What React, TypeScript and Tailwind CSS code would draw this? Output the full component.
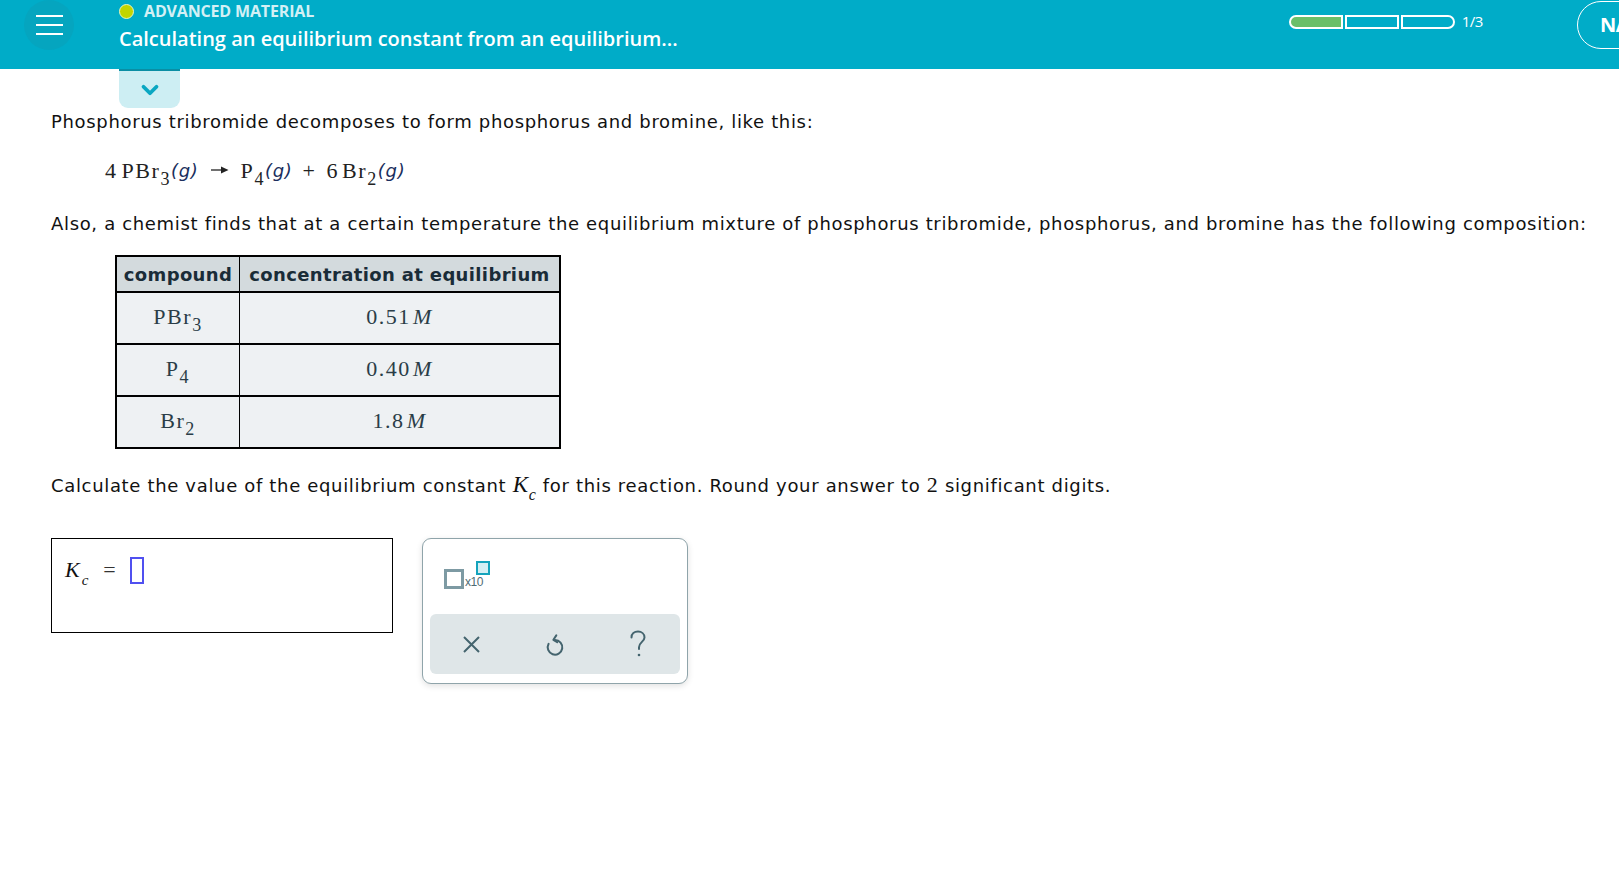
import { ChevronDown } from "lucide-react";

const Sub = ({ children }: { children: React.ReactNode }) => (
  <sub className="text-[0.82em] relative top-[0.4em] bottom-auto align-baseline">{children}</sub>
);

const Gas = () => (
  <span className="font-['DejaVu_Sans',sans-serif] italic text-[18px] tracking-[0.04em] text-[#1b2f5e]">(g)</span>
);

const rows = [
  { name: "PBr", sub: "3", value: "0.51" },
  { name: "P", sub: "4", value: "0.40" },
  { name: "Br", sub: "2", value: "1.8" },
];

const Header = () => (
  <header className="h-[69px] bg-[#00acc8] flex items-start overflow-hidden">
    {/* Menu */}
    <div className="ml-[24px] w-[50px] h-[50px] rounded-full bg-[#05a5bf] flex flex-col items-center justify-center gap-[7px]">
      <span className="block w-[27px] h-[2px] bg-white" />
      <span className="block w-[27px] h-[2px] bg-white" />
      <span className="block w-[27px] h-[2px] bg-white" />
    </div>

    {/* Title */}
    <div className="ml-[45px] font-['Open_Sans',sans-serif]">
      <div className="h-[22px] flex items-center gap-[10px]">
        <span className="w-[15px] h-[15px] rounded-full bg-[#c2d500] border border-[#e8f5c0]" />
        <span className="text-[16px] font-bold tracking-[-0.01em] text-[#d3f0f5] leading-none">
          ADVANCED MATERIAL
        </span>
      </div>
      <div className="mt-[5px] text-[20px] font-semibold text-white leading-[24px]">
        Calculating an equilibrium constant from an equilibrium...
      </div>
    </div>

    {/* Progress */}
    <div className="ml-auto mt-[14px] flex items-center">
      <div className="flex gap-[2px]">
        <div className="w-[54px] h-[14px] rounded-l-full border-2 border-white bg-[#6bbf69]" />
        <div className="w-[54px] h-[14px] border-2 border-white" />
        <div className="w-[54px] h-[14px] rounded-r-full border-2 border-white" />
      </div>
      <span className="ml-[7px] text-[15px] text-white font-['Open_Sans',sans-serif] tracking-[-0.03em] leading-none">
        1/3
      </span>
    </div>

    <div className="ml-[94px] -mr-[40px] mt-[1px] w-[82px] h-[48px] rounded-full border-[1.5px] border-white flex items-center pl-[22px]">
      <span className="text-[20px] font-bold text-white font-['Open_Sans',sans-serif] tracking-tight">NA</span>
    </div>
  </header>
);

const Keypad = () => (
  <div className="w-[266px] h-[146px] rounded-[9px] border border-[#8fa4aa] bg-white shadow-[0_2px_6px_rgba(0,0,0,0.12)] flex flex-col">
    <div className="h-[75px] pl-[21px] pt-[22px]">
      <div className="flex items-end">
        <div className="w-[20px] h-[20px] border-[3px] border-[#7d9aa3]" />
        <span className="text-[12px] leading-none text-[#4f6c75] font-['Liberation_Sans',sans-serif] mb-[1px] ml-[1px] tracking-[-0.04em]">
          x10
        </span>
        <div className="-ml-[7px] mb-[14px] w-[14px] h-[14px] border-2 border-[#14a3bc] bg-[#d4eff4]" />
      </div>
    </div>
    <div className="mx-[7px] h-[60px] rounded-[6px] bg-[#dfe6e8] grid grid-cols-3 items-center justify-items-center text-[#44646e]">
      <svg width="19" height="19" viewBox="0 0 19 19" fill="none" stroke="currentColor" strokeWidth="2">
        <path d="M2 2L17 17M17 2L2 17" />
      </svg>
      <svg width="22" height="26" viewBox="0 0 22 26" fill="none" stroke="currentColor" strokeWidth="2" strokeLinecap="round" strokeLinejoin="round">
        <path d="M11 9A7.3 7.3 0 1 1 4.6 12.8" />
        <path d="M12.3 4.4L9.4 8.8L13.2 11.2" />
      </svg>
      <svg width="20" height="30" viewBox="0 0 20 30" fill="none" stroke="currentColor" strokeWidth="2" strokeLinecap="round">
        <path d="M3.5 8.5C3.5 4.8 6.4 2.5 10 2.5C13.6 2.5 16.5 4.9 16.5 8.4C16.5 12.6 11 13.3 11 18.2V20" />
        <circle cx="11" cy="26" r="1.3" fill="currentColor" stroke="none" />
      </svg>
    </div>
  </div>
);

export default function App() {
  return (
    <div className="min-h-screen bg-white overflow-hidden text-[#111]">
      <Header />

      {/* collapse tab */}
      <div className="ml-[119px] w-[61px] h-[39px] bg-[#cdeef3] rounded-b-[9px] border-t-2 border-[#0a8ea4] flex items-center justify-center">
        <ChevronDown className="w-[26px] h-[26px] text-[#0aa7c2]" strokeWidth={3.5} />
      </div>

      <main className="pl-[51px] font-['DejaVu_Sans',sans-serif] text-[18px] tracking-[0.037em]">
        <p className="mt-[2px] leading-[24px]">
          Phosphorus tribromide decomposes to form phosphorus and bromine, like this:
        </p>

        <div className="mt-[21px] ml-[54px] h-[30px] flex items-center font-['Liberation_Serif',serif] text-[22px] tracking-[0.07em] text-[#222] whitespace-pre">
          <span>4<span className="ml-[4px]">PBr</span><Sub>3</Sub></span>
          <Gas />
          <svg className="mx-[12px]" width="18" height="10" viewBox="0 0 18 10">
            <path d="M0 5H12" stroke="#222" strokeWidth="1.3" />
            <path d="M10 1.5L17.5 5L10 8.5Z" fill="#222" />
          </svg>
          <span>P<Sub>4</Sub></span>
          <Gas />
          <span className="mx-[10px]">+</span>
          <span>6<span className="ml-[3px]">Br</span><Sub>2</Sub></span>
          <Gas />
        </div>

        <p className="mt-[27px] leading-[24px]">
          Also, a chemist finds that at a certain temperature the equilibrium mixture of phosphorus tribromide, phosphorus, and bromine has the following composition:
        </p>

        {/* composition table */}
        <div className="mt-[19px] ml-[64px] w-[446px] border-2 border-black">
          <div className="flex h-[34px] bg-[#d3dadd] text-[#1a2c38] font-bold text-[18px] tracking-[0.02em]">
            <div className="w-[123px] flex items-center justify-center border-r border-black">compound</div>
            <div className="flex-1 flex items-center justify-center">concentration at equilibrium</div>
          </div>
          {rows.map((r) => (
            <div key={r.name} className="flex h-[52px] pb-[4px] bg-[#eef1f3] border-t-2 border-black font-['Liberation_Serif',serif] text-[22px] tracking-[0.07em] text-[#2a3d47]">
              <div className="w-[123px] flex items-center justify-center border-r border-black -mb-[4px] pb-[4px]">
                <span>{r.name}<Sub>{r.sub}</Sub></span>
              </div>
              <div className="flex-1 flex items-center justify-center">
                <span>{r.value}<i className="ml-[2px]">M</i></span>
              </div>
            </div>
          ))}
        </div>

        <p className="mt-[24px] leading-[24px]">
          Calculate the value of the equilibrium constant{" "}
          <span className="font-['Liberation_Serif',serif] italic text-[23px]">K<sub className="text-[16px] relative top-[0.5em] bottom-auto align-baseline">c</sub></span>{" "}
          for this reaction. Round your answer to <span className="font-['Liberation_Serif',serif] text-[22px]">2</span> significant digits.
        </p>

        <div className="mt-[40px] flex items-start gap-[29px]">
          <div className="w-[342px] h-[95px] border border-black flex items-start pl-[13px] pt-[18px]">
            <span className="font-['Liberation_Serif',serif] italic text-[22px] leading-[26px] tracking-normal">
              K<sub className="text-[15px] relative top-[0.55em] bottom-auto align-baseline ml-[2px]">c</sub>
            </span>
            <span className="font-['Liberation_Serif',serif] text-[22px] leading-[26px] ml-[15px] text-[#333]">=</span>
            <span className="ml-[14px] w-[14px] h-[27px] border-2 border-[#5050f0]" />
          </div>
          <Keypad />
        </div>
      </main>
    </div>
  );
}
